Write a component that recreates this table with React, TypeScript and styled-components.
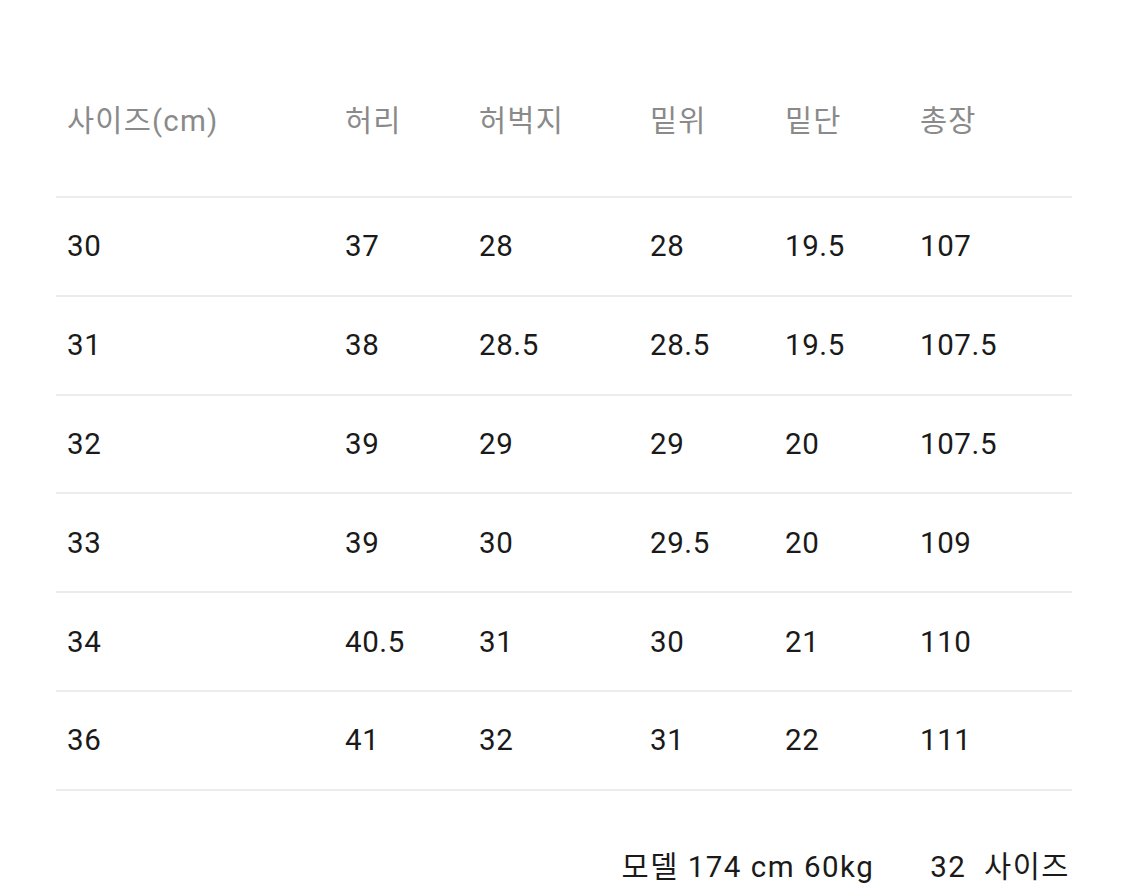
import styled, { createGlobalStyle } from "styled-components";

const headers = ["사이즈(cm)", "허리", "허벅지", "밑위", "밑단", "총장"];
const rows = [
  ["30", "37", "28", "28", "19.5", "107"],
  ["31", "38", "28.5", "28.5", "19.5", "107.5"],
  ["32", "39", "29", "29", "20", "107.5"],
  ["33", "39", "30", "29.5", "20", "109"],
  ["34", "40.5", "31", "30", "21", "110"],
  ["36", "41", "32", "31", "22", "111"],
];
const widths = [278, 134, 171, 135, 135, 163];

const Global = createGlobalStyle`
  body {
    margin: 0;
    background: #fff;
    font-family: Roboto, "Noto Sans CJK KR", sans-serif;
  }
`;

const Page = styled.div`
  padding: 44px 53px 0 56px;
  display: flex;
  flex-direction: column;
`;

const Table = styled.table`
  width: 1016px;
  border-collapse: collapse;
  table-layout: fixed;
`;

const Th = styled.th`
  height: 148px;
  padding: 0 0 4px 11px;
  text-align: left;
  vertical-align: middle;
  font-weight: 400;
  font-size: 29.5px;
  letter-spacing: 1.2px;
  color: #8a8a8a;
  border-bottom: 2px solid #ececec;
`;

const Td = styled.td`
  height: 96.8px;
  padding: 0 0 0 11px;
  font-size: 29.5px;
  letter-spacing: 0.6px;
  color: #1a1a1a;
  border-bottom: 2px solid #ececec;
`;

const Footer = styled.div`
  align-self: flex-end;
  margin-top: 52px;
  margin-right: 2px;
  display: flex;
  gap: 56px;
  font-size: 29.5px;
  letter-spacing: 1.5px;
  color: #1a1a1a;
`;

export default function App() {
  return (
    <>
      <Global />
      <Page>
        <Table>
          <colgroup>
            {widths.map((w, i) => (
              <col key={i} style={{ width: w }} />
            ))}
          </colgroup>
          <thead>
            <tr>
              {headers.map((h) => (
                <Th key={h}>{h}</Th>
              ))}
            </tr>
          </thead>
          <tbody>
            {rows.map((r, i) => (
              <tr key={i}>
                {r.map((c, j) => (
                  <Td key={j}>{c}</Td>
                ))}
              </tr>
            ))}
          </tbody>
        </Table>
        <Footer>
          <span>모델 174 cm 60kg</span>
          <span>32&nbsp;&nbsp;사이즈</span>
        </Footer>
      </Page>
    </>
  );
}
